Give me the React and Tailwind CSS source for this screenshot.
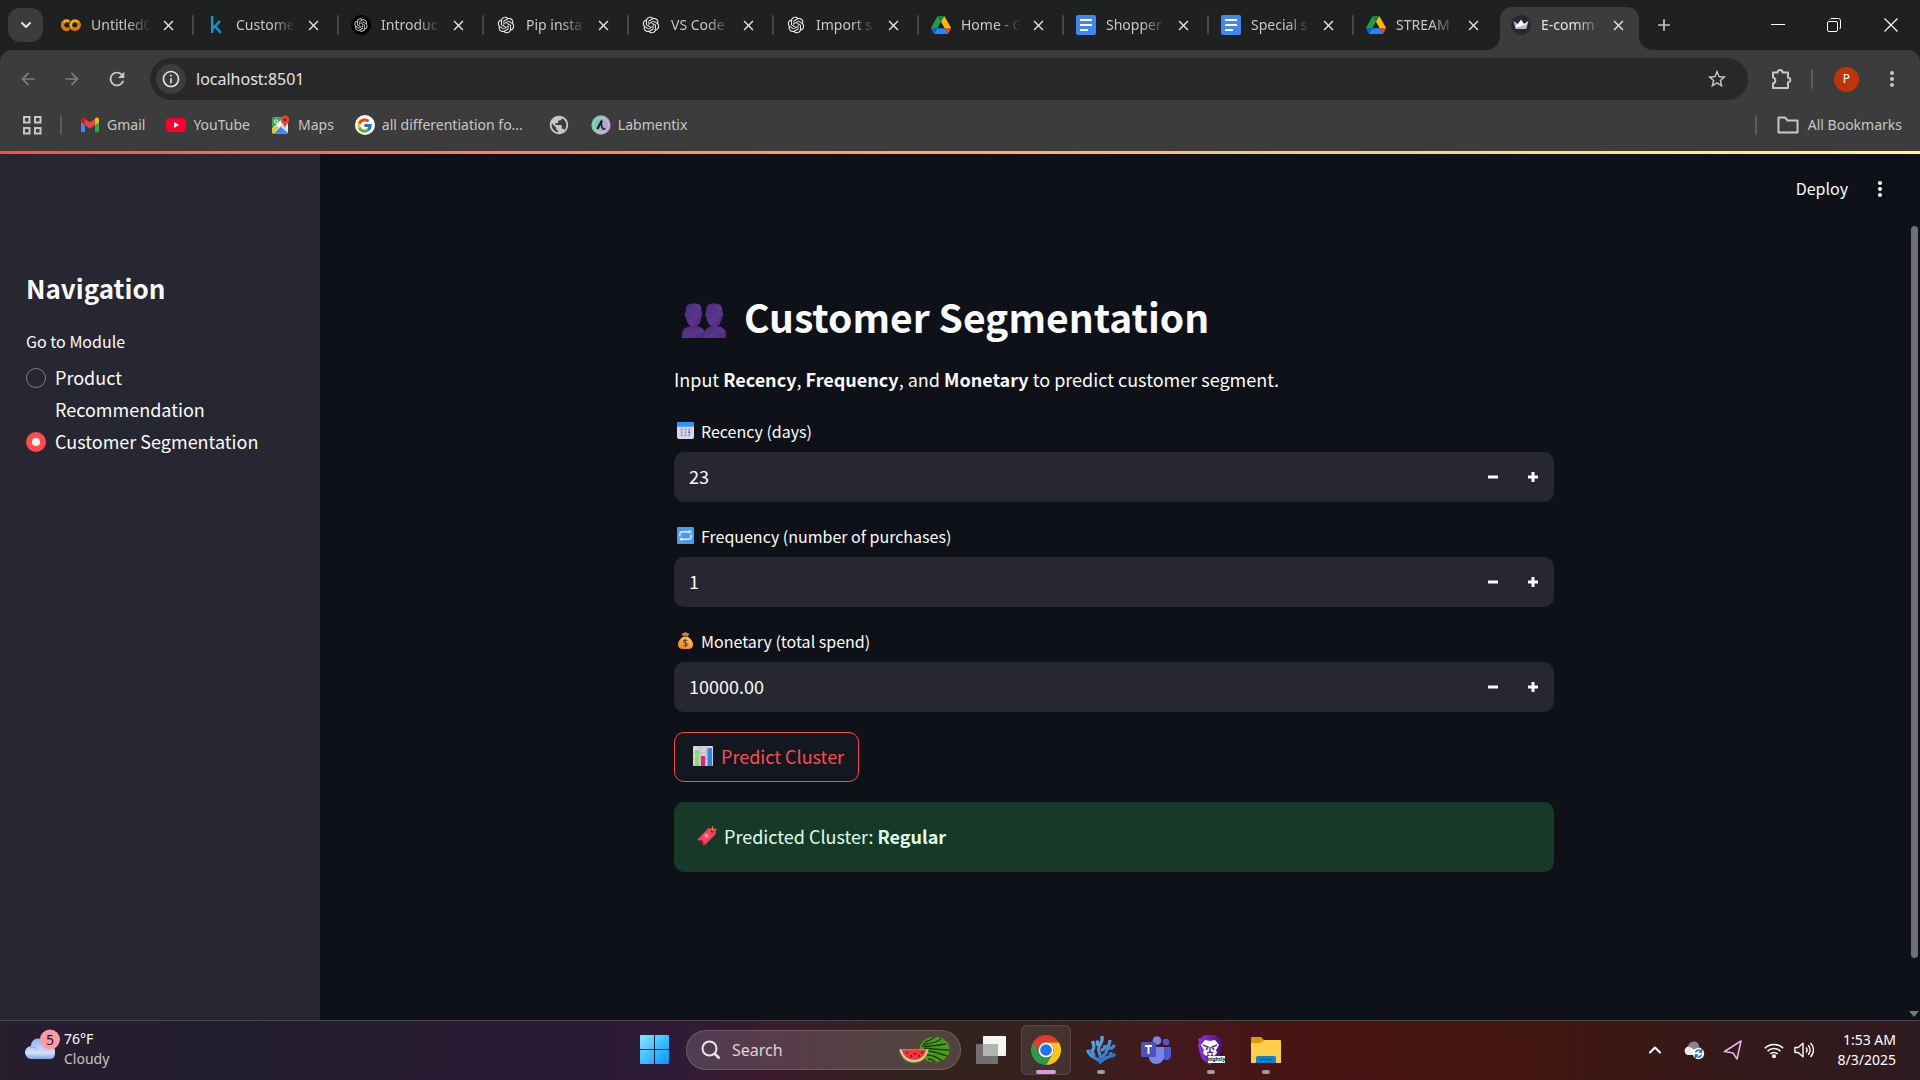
import { useState } from "react";
import { MdArrowBack, MdArrowForward, MdRefresh, MdStarBorder, MdMoreVert, MdClose, MdAdd, MdPublic, MdOutlineInfo } from "react-icons/md";
import { RiOpenaiFill } from "react-icons/ri";
import { FcGoogle } from "react-icons/fc";
import { ChevronDown, ChevronUp } from "lucide-react";

const UI = "font-['Noto_Sans',sans-serif]";
const APP = "font-['Noto_Sans_CJK_SC',sans-serif]";

function Colab() {
  return (
    <svg viewBox="0 0 20 20" className="size-5 shrink-0" fill="none" strokeWidth="3">
      <path d="M8.2 6.6A4.2 4.2 0 1 0 8.2 13.4" stroke="#F9AB00" />
      <circle cx="14" cy="10" r="4.3" stroke="#F9AB00" />
      <path d="M11 13.1A4.3 4.3 0 0 0 17 7" stroke="#E8710A" />
      <path d="M2.8 7A4.2 4.2 0 0 0 8.3 13.4" stroke="#E8710A" />
    </svg>
  );
}

function Kaggle() {
  return (
    <svg viewBox="0 0 20 20" className="size-5 shrink-0" fill="none" stroke="#1095CE" strokeWidth="2.4">
      <path d="M6.2 1v17M14 6.2l-7.2 7.3M9.2 11.2l5.6 6.8" />
    </svg>
  );
}

function Gpt() {
  return <RiOpenaiFill className="size-5 shrink-0 text-[#e8e8e8]" />;
}

function GptDark() {
  return (
    <span className="flex size-5 shrink-0 items-center justify-center rounded-full bg-black">
      <RiOpenaiFill className="size-4 text-[#d5d5d5]" />
    </span>
  );
}

function Drive() {
  return (
    <svg viewBox="0 0 87.3 78" className="h-[18px] w-5 shrink-0">
      <path d="m6.6 66.85 3.85 6.65c.8 1.4 1.95 2.5 3.3 3.3l13.75-23.8h-27.5c0 1.55.4 3.1 1.2 4.5z" fill="#0066da" />
      <path d="m43.65 25-13.75-23.8c-1.35.8-2.5 1.9-3.3 3.3l-25.4 44a9.06 9.06 0 0 0 -1.2 4.5h27.5z" fill="#1e9e48" />
      <path d="m73.55 76.8c1.35-.8 2.5-1.9 3.3-3.3l1.6-2.75 7.65-13.25c.8-1.4 1.2-2.95 1.2-4.5h-27.5l5.85 11.5z" fill="#ea4335" />
      <path d="m43.65 25 13.75-23.8c-1.35-.8-2.9-1.2-4.5-1.2h-18.5c-1.6 0-3.15.45-4.5 1.2z" fill="#188038" />
      <path d="m59.8 53h-32.3l-13.75 23.8c1.35.8 2.9 1.2 4.5 1.2h50.8c1.6 0 3.15-.45 4.5-1.2z" fill="#2684fc" />
      <path d="m73.4 26.5-12.7-22c-.8-1.4-1.95-2.5-3.3-3.3l-13.75 23.8 16.15 28h27.45c0-1.55-.4-3.1-1.2-4.5z" fill="#ffba00" />
    </svg>
  );
}

function Docs() {
  return (
    <svg viewBox="0 0 20 20" className="size-5 shrink-0">
      <rect width="20" height="20" rx="2" fill="#4285F4" />
      <path d="M4 5h12M4 10h12M4 15h8" stroke="#fff" strokeWidth="2" />
    </svg>
  );
}

function Crown() {
  return (
    <svg viewBox="0 0 20 20" className="size-5 shrink-0">
      <circle cx="10" cy="10" r="10" fill="#262730" />
      <path d="M2.5 6 7 9l3-4.2L13 9l4.5-3-2.2 8H4.7z" fill="#b9b9be" />
      <path d="M10 4.8 13 9l4.5-3-3 3.8L5 12.5 4.3 11 7 9z" fill="#f7f7f7" />
    </svg>
  );
}

function GmailIcon() {
  return (
    <svg viewBox="0 0 20 16" className="h-4 w-5">
      <path d="M1 3v11a1.3 1.3 0 0 0 1.3 1.3H5V7z" fill="#4285F4" />
      <path d="M19 3v11a1.3 1.3 0 0 1-1.3 1.3H15V7z" fill="#34A853" />
      <path d="M15 2v6l4-3V2.6C19 .8 17 0 15.700 1z" fill="#FBBC04" />
      <path d="M5 8V1.800l5 3.800 5-3.800V8l-5 3.700z" fill="#EA4335" />
      <path d="M1 2.600V5l4 3V1.800L4.300 1C3 0 1 .8 1 2.600z" fill="#C5221F" />
    </svg>
  );
}

function YouTubeIcon() {
  return (
    <svg viewBox="0 0 20 14" className="h-3.5 w-5">
      <rect width="20" height="14" rx="3.500" fill="#FF0033" />
      <path d="M8 4v6l5-3z" fill="#fff" />
    </svg>
  );
}

function MapsIcon() {
  return (
    <svg viewBox="0 0 20 20" className="size-5">
      <rect x="1" y="2.500" width="16" height="16" rx="2" fill="#f1f1f1" />
      <path d="M1 4.500a2 2 0 0 1 2-2h9L1 14z" fill="#34A853" />
      <path d="M9.500 11.500 17 18v.5H3z" fill="#4285F4" />
      <path d="m1 15 4.500-4.500 2 2L2 18.500H1z" fill="#FBBC04" />
      <path d="m9 11 2-2 6 6v2.500z" fill="#d8dade" />
      <circle cx="5.200" cy="6.500" r="1.700" fill="none" stroke="#fff" strokeWidth="1" />
      <path d="M14 .5a4.300 4.300 0 0 0-4.300 4.300C9.700 8 13 9 14 13c1-4 4.300-5 4.300-8.200A4.300 4.300 0 0 0 14 .5z" fill="#EA4335" />
      <circle cx="14" cy="4.800" r="1.500" fill="#7B231C" />
    </svg>
  );
}

function LabmentixIcon() {
  return (
    <svg viewBox="0 0 20 20" className="size-5">
      <defs>
        <linearGradient id="lab" x1="0" x2="1" y1=".3" y2=".6">
          <stop offset="0" stopColor="#62c9a0" />
          <stop offset=".5" stopColor="#9db7c2" />
          <stop offset="1" stopColor="#c98be0" />
        </linearGradient>
      </defs>
      <circle cx="10" cy="10" r="9.700" fill="url(#lab)" />
      <circle cx="10" cy="10" r="7.500" fill="none" stroke="#d3e6e4" strokeWidth=".6" />
      <path d="M11 5.500 6.300 14" stroke="#17201f" strokeWidth="2.300" fill="none" />
      <path d="M10.500 6v5l1.500 3h2.500" stroke="#17201f" strokeWidth="1.600" fill="none" />
    </svg>
  );
}

const tabs = [
  { title: "Untitled0", icon: Colab },
  { title: "Custome", icon: Kaggle },
  { title: "Introduc", icon: GptDark },
  { title: "Pip insta", icon: Gpt },
  { title: "VS Code", icon: Gpt },
  { title: "Import s", icon: Gpt },
  { title: "Home - G", icon: Drive },
  { title: "Shopper", icon: Docs },
  { title: "Special s", icon: Docs },
  { title: "STREAM", icon: Drive },
  { title: "E-comm", icon: Crown, active: true },
];

function Tab({ title, icon: Icon, active, separated }) {
  return (
    <div className="flex w-[145px] min-w-0 items-stretch pt-[7px]">
      <div className={"relative ml-0.5 flex min-w-0 flex-1 items-center pb-[7px] pl-[11px] " + (active ? "mr-1 rounded-t-xl bg-[#3c3c3c]" : "mr-0.5")}>
        {active && (
          <>
            <svg viewBox="0 0 14 14" className="absolute -left-3.5 bottom-0 size-3.5"><path d="M14 0v14H0A14 14 0 0 0 14 0z" fill="#3c3c3c" /></svg>
            <svg viewBox="0 0 14 14" className="absolute -right-3.5 bottom-0 size-3.5"><path d="M0 0v14h14A14 14 0 0 1 0 0z" fill="#3c3c3c" /></svg>
          </>
        )}
        <Icon />
        <a href="#tab" className={"ml-2.5 w-[60px] whitespace-nowrap text-sm mask-r-from-60% " + (active ? "text-[#e3e3e3]" : "text-[#c7c7c7]")}>
          {title}
        </a>
        <button aria-label={"Close " + title} className="ml-[9px] text-[#e3e3e3]">
          <MdClose className="size-[17px]" />
        </button>
      </div>
      {separated && <div className="-mr-px mt-2 h-5 w-0.5 rounded bg-[#464746]" />}
    </div>
  );
}

function TabStrip() {
  return (
    <div className="flex h-[50px] bg-[#1f2120]">
      <button aria-label="Search tabs" className="mt-2 ml-2 mr-[5px] flex h-[34px] w-[35px] items-center justify-center rounded-xl bg-[#3c3c3c] text-[#e3e3e3]">
        <ChevronDown className="size-4" strokeWidth={3} />
      </button>
      {tabs.map((t, i) => (
        <Tab key={i} {...t} separated={i < 9} />
      ))}
      <button aria-label="New tab" className="ml-[11px] text-[#c7c7c7]"><MdAdd className="size-5" /></button>
      <div className="ml-auto flex items-center text-white">
        <button aria-label="Minimize" className="flex w-14 justify-center">
          <svg viewBox="0 0 14 14" className="size-3.5"><path d="M0 6.500h14" stroke="currentColor" /></svg>
        </button>
        <button aria-label="Restore" className="flex w-14 justify-center">
          <svg viewBox="0 0 14 14" className="size-3.5" fill="none" stroke="currentColor"><rect x=".5" y="3.500" width="10" height="10" rx="1.500" /><path d="M3 1.500 4 .5h7.500a2 2 0 0 1 2 2V10l-1 1" /></svg>
        </button>
        <button aria-label="Close" className="flex w-[58px] justify-center">
          <svg viewBox="0 0 14 14" className="size-3.5"><path d="m.5.5 13 13m0-13-13 13" stroke="currentColor" strokeWidth="1.200" /></svg>
        </button>
      </div>
    </div>
  );
}

function AddressRow() {
  return (
    <div className="flex h-[58px] items-center">
      <button aria-label="Back" className="ml-[18px] text-[#7d7d7d]"><MdArrowBack className="size-5" /></button>
      <button aria-label="Forward" className="ml-6 text-[#7d7d7d]"><MdArrowForward className="size-5" /></button>
      <button aria-label="Reload" className="ml-6 text-[#c7c7c7]"><MdRefresh className="size-[22px]" /></button>
      <div className="ml-[22px] flex h-[42px] flex-1 items-center rounded-full bg-[#282828] pl-1.5 pr-5">
        <button aria-label="View site information" className="flex size-[30px] items-center justify-center rounded-full bg-[#3c3c3c] text-[#e3e3e3]">
          <MdOutlineInfo className="size-5" />
        </button>
        <input aria-label="Address" defaultValue="localhost:8501" className="ml-2.5 min-w-0 flex-1 bg-transparent text-base text-[#e3e3e3] outline-none" />
        <button aria-label="Bookmark this tab" className="text-[#c7c7c7]"><MdStarBorder className="size-[22px]" /></button>
      </div>
      <button aria-label="Extensions" className="ml-[21px] text-[#c7c7c7]">
        <svg viewBox="0 0 24 24" className="size-6" fill="none" stroke="currentColor" strokeWidth="2">
          <path d="M4 5.500h4.600a2.500 2.500 0 0 1 5 0H19v5.200a2.300 2.300 0 0 1 0 4.600V21H4v-4.600a3.100 3.100 0 0 0 0-6z" strokeLinejoin="round" />
        </svg>
      </button>
      <div className="ml-[18px] h-5 w-0.5 rounded bg-[#5c5c5c]" />
      <button aria-label="Profile" className="ml-[21px] flex size-[25px] items-center justify-center rounded-full bg-[#c0340b] text-xs text-white">P</button>
      <button aria-label="Browser menu" className="ml-[21px] mr-4 text-[#c7c7c7]"><MdMoreVert className="size-6" /></button>
    </div>
  );
}

function Bookmark({ icon, children, label }) {
  return (
    <a href="#bookmark" aria-label={label} className="flex items-center gap-[7px] whitespace-nowrap">
      {icon}
      {children}
    </a>
  );
}

function BookmarkBar() {
  return (
    <div className="flex h-[43px] items-center pb-[9px] text-sm text-[#c7c7c7]">
      <button aria-label="Apps" className="ml-[23px]">
        <svg viewBox="0 0 19 19" className="size-[19px]" fill="none" stroke="currentColor" strokeWidth="2">
          <path d="M1 1h5.500v5.500H1zM12 1h5.500v5.500H12zM1 12h5.500v5.500H1zM12 12h5.500v5.500H12z" />
        </svg>
      </button>
      <div className="ml-[18px] h-5 w-0.5 rounded bg-[#5c5c5c]" />
      <div className="ml-[18px] flex items-center gap-[21px]">
        <Bookmark icon={<GmailIcon />}>Gmail</Bookmark>
        <Bookmark icon={<YouTubeIcon />}>YouTube</Bookmark>
        <Bookmark icon={<MapsIcon />}>Maps</Bookmark>
        <Bookmark icon={<span className="flex size-5 items-center justify-center rounded-full bg-white"><FcGoogle className="size-[17px]" /></span>}>all differentiation fo...</Bookmark>
        <Bookmark label="Website" icon={<MdPublic className="ml-1 size-[22px]" />} />
        <Bookmark icon={<LabmentixIcon />}>Labmentix</Bookmark>
      </div>
      <div className="ml-auto h-5 w-0.5 rounded bg-[#5c5c5c]" />
      <button className="ml-5 mr-[18px] flex items-center gap-[9px]">
        <svg viewBox="0 0 22 18" className="h-[18px] w-[22px]" fill="none" stroke="currentColor" strokeWidth="2" strokeLinejoin="round"><path d="M1.500 1.500h6.500l2.500 3h10v12h-19z" /></svg>
        All Bookmarks
      </button>
    </div>
  );
}

function PeopleIcon() {
  return (
    <svg viewBox="0 0 44 35" className="h-[35px] w-11 shrink-0">
      <defs>
        <linearGradient id="pp" x1="0" x2="1" y1="0" y2="1">
          <stop offset="0" stopColor="#4a2a7c" />
          <stop offset=".6" stopColor="#5b378b" />
          <stop offset="1" stopColor="#4a2373" />
        </linearGradient>
      </defs>
      <g fill="url(#pp)">
        <path d="M0 35v-3.500C0 26 4 23 11.500 23S23 26 23 31.500V35z" />
        <path d="M22 35v-3.500C22 26 26 23 33 23s11 3 11 8.500V35z" />
        <path d="M3.500 9.500C3.500 2.500 5 .5 12 .5s7.500 2 7.500 9c1.200 0 1 4-.3 4.500C18.700 20.500 16.500 23.500 12 23.500S4.800 20.500 4 14c-1.800-.5-1.800-4.500-.5-4.500z" />
        <path d="M24 9.500c0-7 1.500-9 8-9s8.500 2 8.500 9c1.300 0 1.300 4-.5 4.500-.8 6.500-3 9.500-7.500 9.500S25 20.500 24.400 14c-1.500-.5-1.600-4.500-.4-4.500z" />
      </g>
      <path d="M12 4c3-.5 6 0 7 2M32 4c3-.5 6 0 7 2" stroke="#6b47a0" fill="none" opacity=".6" />
    </svg>
  );
}

function CalendarIcon() {
  return (
    <svg viewBox="0 0 18 18" className="size-[17px]">
      <rect width="18" height="18" rx="2" fill="#ddd3ec" />
      <path d="M0 5V2a2 2 0 0 1 2-2h14a2 2 0 0 1 2 2v3z" fill="#2b94fb" />
      <path d="M4 8h10M4 11h10M4 14h10" stroke="#9a8fae" strokeWidth="2" strokeDasharray="2 2" />
      <path d="M12 10h2v2h-2z" fill="#2185e8" />
    </svg>
  );
}

function RepeatIcon() {
  return (
    <svg viewBox="0 0 18 18" className="size-[17px]">
      <rect width="18" height="18" rx="1" fill="#4a9bf5" />
      <path d="M3 10V7.500a2.500 2.500 0 0 1 2.500-2.500H14M15 8v2.500a2.500 2.500 0 0 1-2.500 2.500H4" fill="none" stroke="#f0f4ff" strokeWidth="1.500" />
      <path d="m12.500 2.800 3 2.200-3 2.200zM5.500 10.800l-3 2.200 3 2.200z" fill="#f0f4ff" />
    </svg>
  );
}

function MoneyIcon() {
  return (
    <svg viewBox="0 0 18 18" className="size-[17px]">
      <defs><linearGradient id="mn" x1=".8" x2=".2" y1="0" y2="1"><stop offset="0" stopColor="#ffce55" /><stop offset="1" stopColor="#e97c32" /></linearGradient></defs>
      <path d="M5 1.500 7 1l2-1 2 1 2 .5L11.500 5h-5z" fill="#c98432" />
      <path d="M6.500 5h5C15 7 17 10.500 17 13.500S15 18 12 18H6c-3 0-5-1.500-5-4.500S3 7 6.500 5z" fill="url(#mn)" />
      <path d="M6.500 4.700h5" stroke="#754a39" strokeWidth="1.300" />
      <path d="M11 9.200C10 8.200 7 8.200 7 10s4 1.500 4 3.200-3 1.800-4 .8M9 7.500v8.500" fill="none" stroke="#6c4238" strokeWidth="1.200" />
    </svg>
  );
}

function ChartIcon() {
  return (
    <svg viewBox="0 0 20 20" className="size-5">
      <rect width="20" height="20" rx="1" fill="#d9d2e2" />
      <path d="M0 7h20M0 13h20M7 0v20M13 0v20" stroke="#b5acbf" strokeWidth=".7" />
      <path d="M2 4h4v16H2z" fill="#8bdc6c" />
      <path d="M8 10h4v10H8z" fill="#e2236b" />
      <path d="M14.500 2H19v18h-4.500z" fill="#298bdf" />
    </svg>
  );
}

function TagIcon() {
  return (
    <svg viewBox="0 0 20 20" className="size-5">
      <path d="M11 2.500 18 2l.8 6L8 19l-2.500-4.500L0 14z" fill="#f8415c" />
      <path d="m0 14 5.500.5L8 19l-2 .5-1-4z" fill="#d9234e" />
      <circle cx="15.500" cy="5" r="1.500" fill="#5a1c26" />
      <path d="M15.500 5V0M15.500 5 20 3.500" stroke="#b98542" strokeWidth="1" />
      <path d="m9.500 6.500.8 2 2.200.1-1.700 1.400.6 2.200-1.900-1.200-1.800 1.200.5-2.200L6.500 8.600l2.200-.1z" fill="#ff9aa7" />
    </svg>
  );
}

function NumberField({ id, icon, label, value, step }) {
  const [current, setCurrent] = useState(value);
  const shift = (by) => setCurrent((Number(current) + by).toFixed(value.includes(".") ? 2 : 0));
  return (
    <div className="flex flex-col">
      <label htmlFor={id} className="mb-2 flex h-[27px] items-center gap-[7px] pl-[3px] text-base leading-6">
        {icon}
        {label}
      </label>
      <div className="flex h-[50px] items-stretch overflow-hidden rounded-[10px] bg-[#262730]">
        <input id={id} inputMode="decimal" value={current} onChange={(e) => setCurrent(e.target.value)} className="min-w-0 flex-1 bg-transparent px-[15px] pb-0.5 text-lg outline-none" />
        <button aria-label={"Decrease " + label} onClick={() => shift(-step)} className="flex w-[38px] items-center justify-center">
          <svg viewBox="0 0 10 10" className="size-2.5"><path d="M0 5h10" stroke="currentColor" strokeWidth="3" /></svg>
        </button>
        <button aria-label={"Increase " + label} onClick={() => shift(step)} className="flex w-[42px] items-center justify-center">
          <svg viewBox="0 0 10 10" className="size-2.5"><path d="M0 5h10M5 0v10" stroke="currentColor" strokeWidth="3" /></svg>
        </button>
      </div>
    </div>
  );
}

function Sidebar() {
  const [module, setModule] = useState("Customer Segmentation");
  return (
    <aside className="w-80 shrink-0 bg-[#262730] pl-[26px] pr-12 pt-[114px]">
      <h2 className="text-[26px] font-bold leading-10">Navigation</h2>
      <fieldset className="mt-[21px]">
        <legend className="mb-2 text-base leading-6">Go to Module</legend>
        {["Product Recommendation", "Customer Segmentation"].map((name) => (
          <label key={name} className="flex items-start gap-[9px] text-lg leading-8">
            <input
              type="radio"
              name="module"
              checked={module === name}
              onChange={() => setModule(name)}
              className="mt-[7px] size-5 shrink-0 appearance-none rounded-full border border-[#7c7d84] checked:border-[6px] checked:border-[#ff4b4b] checked:bg-[#f5f5f7]"
            />
            {name}
          </label>
        ))}
      </fieldset>
    </aside>
  );
}

function Content() {
  return (
    <main className="flex min-w-0 flex-1 flex-col bg-[#0e1117]">
      <header className="flex h-[70px] items-center justify-end gap-5 pr-7">
        <button className="pb-0.5 text-base">Deploy</button>
        <button aria-label="App menu"><MdMoreVert className="size-6" /></button>
      </header>
      <div className="flex flex-1">
        <div className="flex min-w-0 flex-1 flex-col items-center px-5 pt-[61px]">
          <div className="w-full max-w-[880px]">
            <h1 className="flex h-[62px] items-center gap-[18px] pl-2 text-[39px] font-bold leading-[62px]">
              <span className="pt-2"><PeopleIcon /></span>
              Customer Segmentation
            </h1>
            <p className="mt-4 text-lg leading-8">
              Input <strong>Recency</strong>, <strong>Frequency</strong>, and <strong>Monetary</strong> to predict customer segment.
            </p>
            <div className="mt-[22px] flex flex-col gap-5">
              <NumberField id="recency" icon={<CalendarIcon />} label="Recency (days)" value="23" step={1} />
              <NumberField id="frequency" icon={<RepeatIcon />} label="Frequency (number of purchases)" value="1" step={1} />
              <NumberField id="monetary" icon={<MoneyIcon />} label="Monetary (total spend)" value="10000.00" step={0.01} />
              <button className="flex h-[50px] items-center gap-2 self-start rounded-[10px] border border-[#ff4b4b] bg-[#131720] pb-0.5 pl-[18px] pr-3.5 text-lg text-[#ff4b4b]">
                <ChartIcon />
                Predict Cluster
              </button>
              <div role="status" className="flex h-[70px] items-center gap-[7px] rounded-[10px] bg-[#173928] pb-0.5 pl-[23px] text-lg text-[#dffde9]">
                <TagIcon />
                <span>Predicted Cluster: <strong>Regular</strong></span>
              </div>
            </div>
          </div>
        </div>
        <div className="flex w-3 flex-col items-center justify-between pb-[3px] pt-0.5">
          <div className="h-[732px] w-[7px] rounded-full bg-[#6f6f75]" />
          <svg viewBox="0 0 10 6" className="h-1.5 w-2.5"><path d="M0 0h10L5 6z" fill="#77777c" /></svg>
        </div>
      </div>
    </main>
  );
}

function CloudIcon() {
  return (
    <svg viewBox="0 0 36 32" className="h-8 w-9">
      <defs><linearGradient id="cl" x1="0" x2="0" y1="0" y2="1"><stop offset="0" stopColor="#8fb0ec" /><stop offset=".7" stopColor="#d0e0fb" /><stop offset="1" stopColor="#84a4e5" /></linearGradient></defs>
      <path d="M7 30a6.500 6.500 0 0 1-1-13C6 8 18 7 20 15c5-3 10 1 10 7s-1 8-5 8z" fill="url(#cl)" />
      <path d="M5 19c3-2 6-1 7 1" stroke="#7d9ee2" fill="none" />
      <circle cx="25" cy="10.500" r="10" fill="#ff99a4" />
      <text x="25" y="15.500" textAnchor="middle" fontSize="14" fill="#191919" fontFamily="Noto Sans">5</text>
    </svg>
  );
}

function WindowsIcon() {
  return (
    <svg viewBox="0 0 29 29" className="size-[29px]">
      <defs><linearGradient id="win" gradientUnits="userSpaceOnUse" x1="0" y1="0" x2="29" y2="29"><stop offset="0" stopColor="#8ce2ff" /><stop offset=".5" stopColor="#3fc0ff" /><stop offset="1" stopColor="#0a94f7" /></linearGradient></defs>
      <path d="M0 1a1 1 0 0 1 1-1h13v14H0zM15 0h13a1 1 0 0 1 1 1v13H15zM0 15h14v14H1a1 1 0 0 1-1-1zM15 15h14v13a1 1 0 0 1-1 1H15z" fill="url(#win)" />
    </svg>
  );
}

function WatermelonIcon() {
  return (
    <svg viewBox="0 0 52 28" className="h-7 w-[52px]">
      <ellipse cx="36.500" cy="13.500" rx="15" ry="12.800" fill="#4f9a1b" />
      <g fill="none" stroke="#163f0c" strokeWidth="1.500">
        <path d="M25 8c8 0 14-2 18-5M24 10c10 1 17-1 24-2M26 12c9 1 17 2 25 2M28 15c8 0 15 3 21 5M29 19c5 0 10 2 15 6M27 6c4-1 7-3 10-5M30 23c3 0 5 1 7 3" />
      </g>
      <path d="M1 13.500h30C29 22 24 27 16 27S3 22 1 13.500z" fill="#89ae45" />
      <path d="M2 13.500h28C28 21 23 25.500 16 25.500S4 21 2 13.500z" fill="#f8dfc0" />
      <path d="M3.500 13.500h25C27 20 22 24 16 24S5 20 3.500 13.500z" fill="#f0383c" />
      <g fill="#5b1216"><circle cx="9" cy="17" r=".9" /><circle cx="13" cy="20" r=".9" /><circle cx="17" cy="18" r=".9" /><circle cx="21" cy="20" r=".9" /><circle cx="24" cy="16.500" r=".9" /></g>
    </svg>
  );
}

function TaskViewIcon() {
  return (
    <svg viewBox="0 0 30 28" className="h-7 w-[30px]">
      <rect y="8" width="22" height="20" rx="1" fill="#707070" />
      <rect x="7" width="23" height="20" rx="1" fill="#f5f5f5" />
      <path d="M7 8h15v12H7z" fill="#b3b3b3" />
    </svg>
  );
}

function ChromeIcon() {
  return (
    <svg viewBox="0 0 48 48" className="size-[30px]">
      <path d="M24 0a24 24 0 0 1 20.800 12H24a12 12 0 0 0-10.400 18L3.200 12A24 24 0 0 1 24 0z" fill="#e33b2e" />
      <path d="M44.800 12A24 24 0 0 1 24 48l10.400-18A12 12 0 0 0 24 12z" fill="#fcc31e" />
      <path d="M3.200 12A24 24 0 0 0 24 48l10.400-18a12 12 0 0 1-20.800 0z" fill="#2a9b49" />
      <circle cx="24" cy="24" r="12" fill="#fff" />
      <circle cx="24" cy="24" r="9.300" fill="#1f74ea" />
    </svg>
  );
}

function CoralIcon() {
  return (
    <svg viewBox="0 0 30 30" className="size-[30px]" fill="none" strokeWidth="3.200" strokeLinejoin="round">
      <defs><linearGradient id="co" gradientUnits="userSpaceOnUse" x1="5" y1="2" x2="22" y2="30"><stop offset="0" stopColor="#6bb2ee" /><stop offset="1" stopColor="#2469c4" /></linearGradient></defs>
      <g stroke="url(#co)">
        <path d="M14.500 28c-1-6-10-3-13-13" />
        <path d="M8 21c-.5-3-1-3-3-6.500M6 16c3-3 2-6 .5-10" />
        <path d="M14 25c2-6-3-8-1-13 1-4 4-4 3-11M13.500 11c-2-1-2.500-3-2-5.500" />
        <path d="M15 27c0-8 6-7 6-12 0-3 3-5 3-10" />
        <path d="M15 15c3 0 4-1.500 4-5M22 13c3 1 5 0 6.500-3" />
        <path d="M16 26c2-5 9-1 9-9M22 21c3 1 6 0 7-2.500" />
      </g>
      <path d="M10 23c4-1 6-1 10 0l-5.500 6.500z" fill="#2c72cb" />
    </svg>
  );
}

function TeamsIcon() {
  return (
    <svg viewBox="0 0 30 30" className="size-[30px]">
      <circle cx="25" cy="7" r="3.300" fill="#5059c9" />
      <circle cx="16" cy="5.500" r="4.300" fill="#7b83eb" />
      <path d="M20 12h9a1 1 0 0 1 1 1v7c0 4-3 5-5 5s-4-1-5-3z" fill="#5059c9" />
      <path d="M9 12h13a1 1 0 0 1 1 1v8c0 5-4 8-8 8s-7-3-7-7z" fill="#7b83eb" />
      <rect y="7" width="15" height="15" rx="1.500" fill="#4b53bc" />
      <path d="M4 11h7M7.500 11v8" stroke="#fff" strokeWidth="1.800" />
    </svg>
  );
}

function BraveIcon() {
  return (
    <svg viewBox="0 0 30 30" className="size-[30px]">
      <defs><linearGradient id="br" x1="0" x2="1"><stop offset="0" stopColor="#8f35d8" /><stop offset="1" stopColor="#45107f" /></linearGradient></defs>
      <path d="M8 0h12l3 3 3 1-1 4 1 3-3 11c-1 3-5 5-9 8-4-3-8-5-9-8L2 11l1-3-1-4 3-1z" fill="url(#br)" />
      <path d="m9 5 5 1 5-1 4 5-3 5 1 3-3 3-2-2-2 2-2-2-2 2-3-3 1-3-3-5z" fill="#fff" />
      <path d="m7 10 5 2-2 3M21 10l-5 2 2 3M14 12v5M11 18l3-1 3 1" stroke="#5e1e9f" strokeWidth="1.400" fill="none" />
      <rect x="12" y="21" width="17" height="7" fill="#f2f2f2" />
      <text x="20.500" y="26" textAnchor="middle" fontSize="5" fontWeight="bold" fill="#222" fontFamily="Noto Sans">nightly</text>
    </svg>
  );
}

function FolderIcon() {
  return (
    <svg viewBox="0 0 30 28" className="h-7 w-[30px]">
      <path d="M0 2a1 1 0 0 1 1-1h9l3 3-3 4H0z" fill="#d99a0b" />
      <path d="M0 7h9l4-3h16a1 1 0 0 1 1 1v22H0z" fill="#ffcf46" />
      <path d="M5 27v-5a2 2 0 0 1 2-2h16a2 2 0 0 1 2 2v5z" fill="#0f7fd0" />
      <path d="M9 23.500h12" stroke="#0a4f8d" />
    </svg>
  );
}

function TaskButton({ label, icon, active, running }) {
  return (
    <button
      aria-label={label}
      className={"relative flex size-[50px] items-center justify-center rounded-md " + (active ? "border border-white/10 bg-white/8" : "")}
    >
      {icon}
      {active && <span className="absolute bottom-0 h-1 w-5 rounded-full bg-[#dc9ae4]" />}
      {running && <span className="absolute bottom-px h-1 w-2 rounded-full bg-[#a39a9c]" />}
    </button>
  );
}

function Taskbar() {
  return (
    <footer className="grid h-[60px] grid-cols-[1fr_auto_1fr] items-center border-t border-[#4a464c] bg-[linear-gradient(to_right,#271e2e_0%,#231f2f_12%,#2a1a35_30%,#2f1b37_35%,#3b1a2b_40%,#34221f_47%,#35221f_54%,#43191d_61%,#481413_68%,#421711_80%,#35191a_90%,#2d1b20_100%)] pb-0.5 text-white">
      <button className="ml-[25px] flex items-start gap-[3px] justify-self-start pb-0.5 text-left text-sm leading-5">
        <CloudIcon />
        <span className="flex flex-col">
          <span>76°F</span>
          <span className="text-[#c5c2c7]">Cloudy</span>
        </span>
      </button>
      <div className="flex items-center gap-[5px]">
        <TaskButton label="Start" icon={<WindowsIcon />} />
        <label className="ml-0.5 flex h-10 w-[275px] items-center rounded-full border border-white/15 bg-white/15 pl-3.5 pr-2.5">
          <svg viewBox="0 0 20 20" className="size-5" fill="none" stroke="#e8e4e8" strokeWidth="2"><circle cx="8.500" cy="8.500" r="7" /><path d="m13.500 13.500 5 5" strokeWidth="2.500" /></svg>
          <input type="search" aria-label="Search" placeholder="Search" className="ml-[11px] min-w-0 flex-1 bg-transparent text-base text-white outline-none placeholder:text-[#dbd5d8]" />
          <WatermelonIcon />
        </label>
        <TaskButton label="Task view" icon={<TaskViewIcon />} />
        <TaskButton label="Chrome" icon={<ChromeIcon />} active />
        <TaskButton label="Coral" icon={<CoralIcon />} running />
        <TaskButton label="Teams" icon={<TeamsIcon />} />
        <TaskButton label="Brave" icon={<BraveIcon />} running />
        <TaskButton label="File Explorer" icon={<FolderIcon />} running />
      </div>
      <div className="flex items-center justify-self-end pr-6">
        <button aria-label="Hidden icons"><ChevronUp className="size-5" strokeWidth={2.500} /></button>
        <button aria-label="Cloud sync" className="ml-[18px]">
          <svg viewBox="0 0 22 20" className="h-5 w-[22px]">
            <path d="M4 14A4.500 4.500 0 0 1 5 6c2-6 11-6 11 1 4 1 4 7 0 7z" fill="#8d8583" />
            <path d="M4 15a4.500 4.500 0 0 1 0-8c4-1 5 2 8 3v5z" fill="#ececec" />
            <circle cx="15.500" cy="13.500" r="5.700" fill="#fff" />
            <path d="M12.500 12.500a3.300 3.300 0 0 1 6-1M18.500 14.500a3.300 3.300 0 0 1-6 1M18.700 9v3h-3M12.300 18v-3h3" stroke="#1565bd" strokeWidth="1.300" fill="none" />
          </svg>
        </button>
        <button aria-label="Location" className="ml-[18px]">
          <svg viewBox="0 0 20 20" className="size-5" fill="none" stroke="#e3b0ec" strokeWidth="1.600" strokeLinejoin="round"><path d="M18 1 1.500 11.500 10 13l4 6z" /></svg>
        </button>
        <button aria-label="Network and volume" className="ml-[21px] flex gap-2.5">
          <svg viewBox="0 0 20 20" className="size-5" fill="none" stroke="#fff" strokeWidth="1.500">
            <path d="M.8 8.200a13 13 0 0 1 18.400 0M3.600 11.100a9 9 0 0 1 12.800 0M6.300 13.900a5.300 5.300 0 0 1 7.400 0" />
            <circle cx="10" cy="16.200" r="1.300" fill="#fff" />
          </svg>
          <svg viewBox="0 0 20 20" className="size-5" fill="none" stroke="#fff" strokeWidth="1.400" strokeLinejoin="round">
            <path d="M1 7.500v5h3.200L9 16.700V3.300L4.200 7.500zM12 7.500c1.300 1.500 1.300 3.500 0 5M14.200 5.300c2.500 2.700 2.500 6.700 0 9.400M16.500 3c4 4 4 10 0 14" />
          </svg>
        </button>
        <button className="ml-5 flex w-[62px] flex-col items-end whitespace-nowrap text-sm leading-5">
          <span>1:53 AM</span>
          <span>8/3/2025</span>
        </button>
      </div>
    </footer>
  );
}

export default function App() {
  return (
    <div className={"flex min-h-screen flex-col bg-[#1f2120] " + UI}>
      <TabStrip />
      <nav className="rounded-t-xl bg-[#3c3c3c]">
        <AddressRow />
        <BookmarkBar />
      </nav>
      <div className="h-[3px] bg-linear-to-r from-[#ff4b4b] to-[#fffd80]" />
      <div className={"flex flex-1 text-[#fafafa] " + APP}>
        <Sidebar />
        <Content />
      </div>
      <Taskbar />
    </div>
  );
}
